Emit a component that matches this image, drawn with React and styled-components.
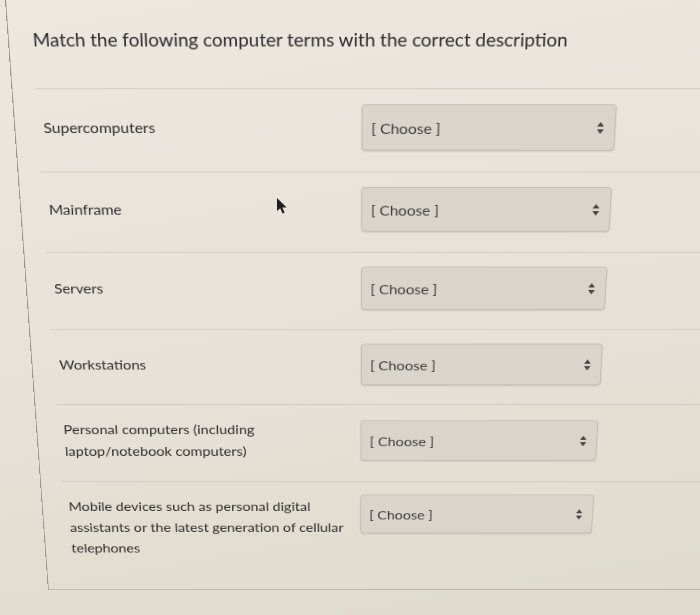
import styled, { createGlobalStyle } from "styled-components";

const GlobalStyle = createGlobalStyle`
  html, body {
    margin: 0;
    padding: 0;
  }
  body {
    font-family: Lato, "Open Sans", "Liberation Sans", sans-serif;
    background: #e6e2d8;
  }
`;

const Screen = styled.div`
  position: relative;
  width: 700px;
  height: 615px;
  overflow: hidden;
  background: linear-gradient(170deg, #ece8e0 0%, #e6e2d7 55%, #dfdacd 100%);
`;

// the photo is taken at an angle, so the whole card leans and shrinks toward the bottom
const Card = styled.div`
  width: 820px;
  margin-left: 5px;
  padding-bottom: 19px;
  border-left: 1px solid #9a968e;
  border-bottom: 1px solid #9a968e;
  transform-origin: 30px 0;
  transform: skewX(3.8deg) perspective(1000px) rotateX(-12deg);
`;

const Title = styled.h1`
  margin: 0;
  padding: 29px 0 39px 24px;
  font-size: 19px;
  line-height: 24px;
  font-weight: 400;
  color: #2b2b2b;
`;

const Row = styled.div`
  display: flex;
  align-items: ${(p) => (p.$top ? "flex-start" : "center")};
  margin-left: 23px;
  padding: 16px 0 23px 6px;
  border-top: 1px solid #cfcbc1;
`;

const Label = styled.div`
  flex: 0 0 327px;
  margin: ${(p) => (p.$top ? "1px 0 0" : "0 0 2px")};
  font-size: 16px;
  line-height: 27px;
  color: #2f2f2f;
`;

const Select = styled.div`
  box-sizing: border-box;
  display: flex;
  align-items: center;
  justify-content: space-between;
  width: 261px;
  height: 50px;
  padding: 0 11px 0 9px;
  background: #d9d5cb;
  border: 1px solid #c1bdb3;
  border-radius: 4px;
  box-shadow: 0 1px 2px rgba(0, 0, 0, 0.14);
  font-size: 16px;
  color: #3f3f3f;
`;

const Pointer = styled.svg`
  position: absolute;
  left: 277px;
  top: 198px;
`;

const terms = [
  "Supercomputers",
  "Mainframe",
  "Servers",
  "Workstations",
  "Personal computers (including laptop/notebook computers)",
  "Mobile devices such as personal digital assistants or the latest generation of cellular telephones",
];

const Arrows = () => (
  <svg width="7" height="13" viewBox="0 0 7 13">
    <path d="M3.5 0 L7 5 L0 5 Z" fill="#444" />
    <path d="M0 8 L7 8 L3.5 13 Z" fill="#444" />
  </svg>
);

const App = () => {
  return (
    <Screen>
      <GlobalStyle />
      <Card>
        <Title>Match the following computer terms with the correct description</Title>
        {terms.map((term, i) => (
          <Row key={term} $top={i === terms.length - 1}>
            <Label $top={i === terms.length - 1}>{term}</Label>
            <Select>
              <span>[ Choose ]</span>
              <Arrows />
            </Select>
          </Row>
        ))}
      </Card>
      <Pointer width="11" height="16" viewBox="0 0 11 16">
        <path d="M0 0 L0 13 L3.2 10.2 L5.6 15.5 L7.6 14.6 L5.3 9.4 L9.6 9.4 Z" fill="#1e1e1e" />
      </Pointer>
    </Screen>
  );
};

export default App;
